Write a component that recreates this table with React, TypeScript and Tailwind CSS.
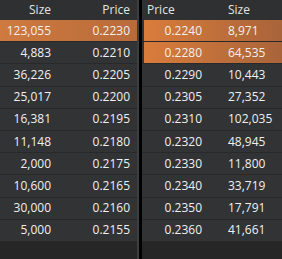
const bids = [
  ["123,055", "0.2230"],
  ["4,883", "0.2210"],
  ["36,226", "0.2205"],
  ["25,017", "0.2200"],
  ["16,381", "0.2195"],
  ["11,148", "0.2180"],
  ["2,000", "0.2175"],
  ["10,600", "0.2165"],
  ["30,000", "0.2160"],
  ["5,000", "0.2155"],
];

const asks = [
  ["0.2240", "8,971"],
  ["0.2280", "64,535"],
  ["0.2290", "10,443"],
  ["0.2305", "27,352"],
  ["0.2310", "102,035"],
  ["0.2320", "48,945"],
  ["0.2330", "11,800"],
  ["0.2340", "33,719"],
  ["0.2350", "17,791"],
  ["0.2360", "41,661"],
];

export default function App() {
  return (
    <div
      className="w-[282px] h-[259px] bg-[#262627] flex text-[12px] text-[#f0f0f0] overflow-hidden"
      style={{ fontFamily: '"Open Sans", "Noto Sans", sans-serif' }}
    >
      {/* bids */}
      <div className="w-[137px] flex flex-col">
        <div className="h-[20px] flex items-center bg-[#2f3032] text-[#e4e4e4]">
          <span className="w-[51px] text-right">Size</span>
          <span className="w-[79px] text-right">Price</span>
        </div>
        {bids.map(([size, price], i) => (
          <div
            key={i}
            className={
              "h-[22.2px] flex items-center border-b border-[#28292a] " +
              (i === 0 ? "bg-gradient-to-r from-[#cf7a3f] to-[#b86b3a]" : "bg-[#323335]")
            }
          >
            <span className="w-[51px] text-right">{size}</span>
            <span className="w-[79px] text-right">{price}</span>
          </div>
        ))}
      </div>

      {/* divider */}
      <div className="w-[2px] bg-[#3d3e40]" />
      <div className="w-[3px] bg-black" />

      {/* asks */}
      <div className="flex-1 flex flex-col bg-[#262627]">
        <div className="h-[20px] flex items-center bg-[#2f3032] text-[#e4e4e4] pl-[5px]">
          <span className="w-[81px]">Price</span>
          <span>Size</span>
        </div>
        {asks.map(([price, size], i) => (
          <div key={i} className="h-[22.2px] flex border-b border-[#28292a] bg-[#323335] pl-[2px]">
            <div
              className={
                "flex-1 flex items-center " +
                (i < 2 ? "bg-gradient-to-r from-[#d97c3b] to-[#a9643a]" : "")
              }
            >
              <span className="w-[58px] text-right">{price}</span>
              <span className="pl-[26px]">{size}</span>
            </div>
          </div>
        ))}
      </div>
    </div>
  );
}
